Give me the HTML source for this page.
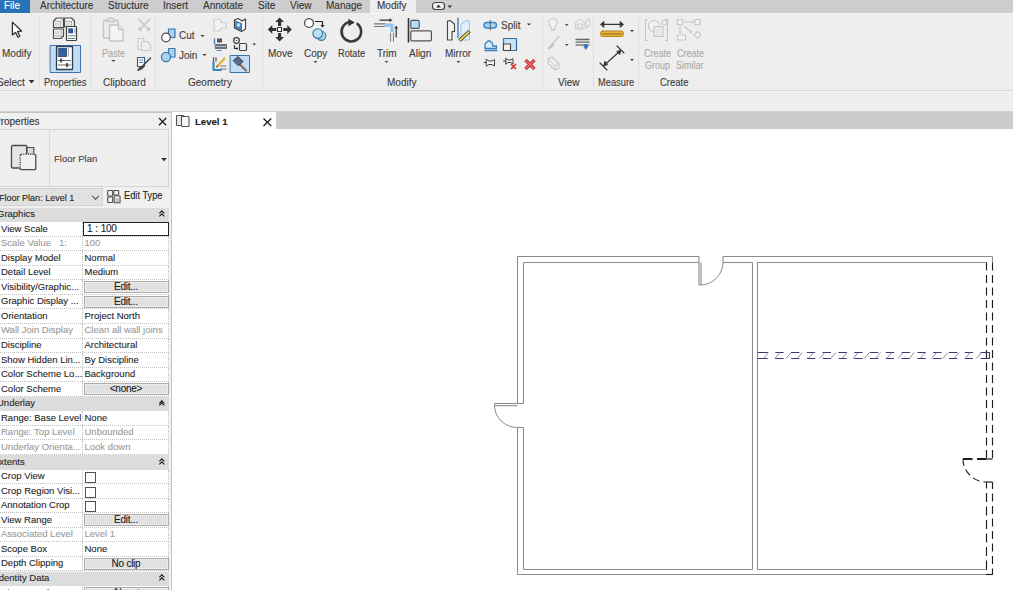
<!DOCTYPE html>
<html><head><meta charset="utf-8"><style>
*{margin:0;padding:0;box-sizing:border-box}
body{width:1013px;height:590px;overflow:hidden;position:relative;background:#fff;font-family:"Liberation Sans",sans-serif;color:#222;-webkit-text-stroke:0.1px currentColor}
.a{position:absolute}
.t{position:absolute;white-space:nowrap;font-size:10px;line-height:12px}
.rl{position:absolute;white-space:nowrap;font-size:10px;line-height:12px;color:#3a3a3a}
.sep{position:absolute;top:15px;width:1px;height:73px;background:#e0e0e0}
.row{position:absolute;left:0;width:169px;height:14.56px;background:#fff;border-bottom:1px dotted #c0c0c0;border-right:1px dotted #c0c0c0;font-size:9.5px;line-height:12px}
.row .k{position:absolute;left:1px;top:0.5px;color:#262626}
.row .v{position:absolute;left:82px;top:0;width:86px;height:13.56px;border-left:1px dotted #c0c0c0}
.row .vt{position:absolute;left:1.5px;top:0.5px;color:#262626}
.row.dis .k,.row.dis .vt{color:#9a9a9a}
.hd{position:absolute;left:0;width:169px;height:14.56px;background:#dcdcdc;font-size:9.5px;line-height:12px}
.hd .k{position:absolute;left:-3px;top:0.5px;color:#262626}
.chev{position:absolute;left:158.5px;top:3px;width:6px;height:7px}
.chev:before,.chev:after{content:"";position:absolute;left:1px;width:2.6px;height:2.6px;border-left:1.5px solid #111;border-top:1.5px solid #111;transform:rotate(45deg)}
.chev:before{top:0.8px}.chev:after{top:3.6px}
.btn{position:absolute;left:0.5px;top:1px;width:85px;height:12px;background:#e1e1e1;border:1px solid #ababab;box-shadow:inset 0 0 0 1px #ececec;text-align:center;color:#1a1a1a;line-height:10px;font-size:10px;letter-spacing:-0.25px}
.cb{position:absolute;left:2px;top:2.5px;width:11px;height:11px;border:1.3px solid #505050;background:#fff}
.vbox{position:absolute;left:0;top:0;width:86px;height:14px;border:1.6px solid #222;background:#fff;padding-left:3px;line-height:12px;font-size:10px;color:#222;letter-spacing:-0.3px;word-spacing:0.5px}
</style></head><body>
<!-- tab bar -->
<div class="a" style="left:0;top:0;width:1013px;height:13px;background:#cdcdcd"></div>
<div class="a" style="left:0;top:0;width:30px;height:13px;background:#2872b6"></div>
<div class="t" style="left:4px;top:0px;color:#fff">File</div>
<div class="t" style="left:40px;top:0px;color:#333">Architecture</div>
<div class="t" style="left:108px;top:0px;color:#333">Structure</div>
<div class="t" style="left:163px;top:0px;color:#333">Insert</div>
<div class="t" style="left:203px;top:0px;color:#333">Annotate</div>
<div class="t" style="left:258px;top:0px;color:#333">Site</div>
<div class="t" style="left:290px;top:0px;color:#333">View</div>
<div class="t" style="left:326px;top:0px;color:#333">Manage</div>
<div class="a" style="left:370px;top:0;width:46px;height:14px;background:#eeeeee"></div>
<div class="t" style="left:377px;top:0px;color:#333">Modify</div>
<!-- ribbon -->
<div class="a" style="left:0;top:13px;width:1013px;height:78px;background:#eeeeee;border-top:1px solid #f4f4f4;border-bottom:1px solid #f4f4f4"></div>
<div class="a" style="left:0;top:90px;width:1013px;height:1px;background:#d9d9d9"></div>
<div class="a" style="left:0;top:91px;width:1013px;height:21px;background:#efefef;border-top:1px solid #f4f4f4"></div>
<div class="sep" style="left:39px"></div>
<div class="sep" style="left:90px"></div>
<div class="sep" style="left:155px"></div>
<div class="sep" style="left:262px"></div>
<div class="sep" style="left:542px"></div>
<div class="sep" style="left:593px"></div>
<div class="sep" style="left:638px"></div>

<div class="rl" style="left:2px;top:48px">Modify</div>
<div class="rl" style="left:-3px;top:77px">Select</div>
<div class="rl" style="left:44px;top:77px;transform:scaleX(0.93);transform-origin:0 0">Properties</div>
<div class="rl" style="left:102px;top:48px;color:#aaa;transform:scaleX(0.9);transform-origin:0 0">Paste</div>
<div class="rl" style="left:103px;top:77px">Clipboard</div>
<div class="rl" style="left:179px;top:30px">Cut</div>
<div class="rl" style="left:179px;top:50px">Join</div>
<div class="rl" style="left:188px;top:77px">Geometry</div>
<div class="rl" style="left:268px;top:48px">Move</div>
<div class="rl" style="left:304px;top:48px">Copy</div>
<div class="rl" style="left:338px;top:48px;transform:scaleX(0.92);transform-origin:0 0">Rotate</div>
<div class="rl" style="left:377px;top:48px">Trim</div>
<div class="rl" style="left:409px;top:48px">Align</div>
<div class="rl" style="left:445px;top:48px">Mirror</div>
<div class="rl" style="left:387px;top:77px">Modify</div>
<div class="rl" style="left:501px;top:20px">Split</div>
<div class="rl" style="left:558px;top:77px">View</div>
<div class="rl" style="left:598px;top:77px;transform:scaleX(0.93);transform-origin:0 0">Measure</div>
<div class="rl" style="left:644px;top:48px;color:#aaa;transform:scaleX(0.9);transform-origin:0 0">Create</div>
<div class="rl" style="left:645px;top:60px;color:#aaa;transform:scaleX(0.9);transform-origin:0 0">Group</div>
<div class="rl" style="left:677px;top:48px;color:#aaa;transform:scaleX(0.9);transform-origin:0 0">Create</div>
<div class="rl" style="left:676px;top:60px;color:#aaa;transform:scaleX(0.9);transform-origin:0 0">Similar</div>
<div class="rl" style="left:660px;top:77px;transform:scaleX(0.95);transform-origin:0 0">Create</div>

<!--ICONS-->
<svg class="a" style="left:0;top:0" width="1013" height="130" viewBox="0 0 1013 130">
<g fill="none" stroke-linejoin="round" stroke-linecap="round">
<!-- tab icon -->
<rect x="432.5" y="2.5" width="12" height="7" rx="3" stroke="#444" stroke-width="1.2" fill="#f4f4f4"/>
<path d="M436 7.5 L438.5 4.5 L441 7.5Z" fill="#333" stroke="none"/>
<path d="M447.5 5.5 L452 5.5 L449.75 8Z" fill="#333" stroke="none"/>
<!-- cursor -->
<path d="M12.4 22.1 L12.4 35 L15.4 32.4 L18 37.2 L19.8 36.2 L17.6 31.6 L21.5 31 Z" fill="#fff" stroke="#333" stroke-width="1.3"/>
<!-- select arrow -->
<path d="M28.6 80 L34.5 80 L31.55 83.4Z" fill="#333" stroke="none"/>
<!-- properties type icon: cubes -->
<g stroke="#4a4a4a" stroke-width="1.2" fill="#f3f3f3">
<path d="M53.5 21 L56.5 18 H63.5 V27.5 H53.5Z"/>
<path d="M53.5 29 H63.5 V36 L61 38.5 H53.5Z"/>
<path d="M64.5 18 H71.5 L74.5 21 V27 H64.5Z"/>
</g>
<g stroke="#9a9a9a" stroke-width="0.8" fill="none">
<path d="M53.5 21.5 H60.5 L63.5 18.5 M60.5 21.5 V27"/>
<path d="M53.5 36 H61 M61 29.5 V38"/>
<path d="M64.8 21.5 H71.5 L74.3 18.5 M71.5 21.5 V27"/>
</g>
<g fill="#d8d8d8" stroke="none">
<rect x="55" y="23" width="4" height="3"/>
<rect x="55" y="31" width="4" height="3.5"/>
<rect x="66" y="23" width="4" height="3"/>
</g>
<rect x="66.5" y="26.5" width="10" height="14" rx="0.8" fill="#fff" stroke="#3c3c3c" stroke-width="1.2"/>
<rect x="68.3" y="28.3" width="4.8" height="5" fill="#2b579a" stroke="none"/>
<path d="M75 28.5 V33" stroke="#999" stroke-width="1"/>
<path d="M68.3 35.8 H75 M68.3 38.5 H75" stroke="#5a6b80" stroke-width="0.9"/>
<!-- properties highlighted -->
<rect x="50.5" y="45.5" width="30" height="27" fill="#c4ddf6" stroke="#3d72aa" stroke-width="1"/>
<rect x="56.5" y="46.5" width="16" height="23" fill="#fff" stroke="#2d3f55" stroke-width="1.3"/>
<rect x="58.5" y="48.5" width="8" height="8" fill="#3760a0" stroke="#243c66" stroke-width="0.8"/>
<path d="M68.5 48.5 V56" stroke="#aaa" stroke-width="1.2"/>
<path d="M58.5 60.5 H70.5 M58.5 65 H70.5" stroke="#666" stroke-width="1.2"/>
<path d="M61 59 V62 M67 63.5 V66.5" stroke="#333" stroke-width="1.6"/>
<!-- paste (disabled) -->
<g stroke="#c4c4c4" stroke-width="1.3" fill="#ededed">
<path d="M103.5 20.5 H118 V38 H103.5Z"/>
<path d="M107 19.5 Q110.75 16.5 114.5 19.5 V21.5 H107Z"/>
<path d="M109.5 25 H118.5 L123 29.5 V41 H109.5Z" fill="#f4f4f4"/>
<path d="M118.5 25 V29.5 H123" />
</g>
<path d="M111.5 60 L115.5 60 L113.5 62Z" fill="#444" stroke="none"/>
<!-- scissors disabled -->
<g stroke="#c6c6c6" stroke-width="1.6">
<path d="M139 19.5 L149.5 30 M149.5 19.5 L139 30"/>
<path d="M139 28 L141 30.5 M149.5 28 L147.5 30.5"/>
</g>
<!-- copy disabled -->
<g stroke="#c8c8c8" stroke-width="1.1" fill="#efefef">
<path d="M138 38.5 H144 V49.5 H138Z"/>
<path d="M141.5 41.5 H147 L150.5 45 V50.5 H141.5Z"/>
</g>
<!-- match properties -->
<rect x="137.5" y="57.5" width="7" height="9" fill="#fff" stroke="#3a5f7a" stroke-width="1.2"/>
<path d="M139.5 60 H142.5 M139.5 62.5 H142.5" stroke="#3a7fb8" stroke-width="1.2"/>
<path d="M150.5 58 L142 66.5" stroke="#444" stroke-width="1.5"/>
<path d="M142 66 Q138.5 67.5 137.5 70.5 Q141 70 143.5 67.5Z" fill="#444" stroke="#444" stroke-width="1"/>
<!-- cut -->
<rect x="168.5" y="29" width="6.5" height="8.5" fill="#a9d3ef" stroke="#3678ad" stroke-width="1.2"/>
<circle cx="166" cy="37.5" r="4.3" fill="#fff" stroke="#5a4a4a" stroke-width="1.2"/>
<path d="M200.5 35 L204.5 35 L202.5 37Z" fill="#333" stroke="none"/>
<!-- join -->
<rect x="168.5" y="48.5" width="6.5" height="8.5" fill="#a9d3ef" stroke="#3678ad" stroke-width="1.2"/>
<circle cx="166" cy="57" r="4.6" fill="#a9d3ef" stroke="#3678ad" stroke-width="1.2"/>
<path d="M202.5 54 L206.5 54 L204.5 56Z" fill="#333" stroke="none"/>
<!-- unjoin gray -->
<g stroke="#cfcfcf" stroke-width="1.2" fill="#f2f2f2">
<path d="M214 19 H219 L222 22 V28 L219 31 H214Z"/>
<path d="M221 22.5 H226 V28 H221"/>
</g>
<!-- 3d wall -->
<path d="M234.5 20 L238 18.5 L242 21 L245.5 19 V29 L241.5 31.5 L234.5 28Z" fill="#fff" stroke="#444" stroke-width="1.2"/>
<path d="M235.5 21 L241.5 23.5 V30.5 L235.5 27.5Z" fill="#4a8dc8" stroke="#2a5a8a" stroke-width="0.8"/>
<rect x="237" y="23.5" width="3" height="3" fill="#bfe0f7" stroke="none"/>
<!-- split face -->
<path d="M214.5 39 V43.5" stroke="#3a7fc4" stroke-width="1.3"/>
<rect x="217" y="38.5" width="5" height="4" fill="#555" stroke="none"/>
<rect x="215.5" y="44.5" width="11" height="4" fill="#657080" stroke="#444" stroke-width="0.6"/>
<path d="M216.5 46.5 H225.5" stroke="#ddd" stroke-width="0.8" stroke-dasharray="1 1"/>
<path d="M217 50.5 H221" stroke="#4a84c4" stroke-width="1"/>
<!-- wall joins -->
<circle cx="236.5" cy="40.5" r="2.8" fill="#fff" stroke="#333" stroke-width="1.2"/>
<circle cx="236.5" cy="40.5" r="0.8" fill="#333" stroke="none"/>
<path d="M234.5 45.5 V48.5 H237" stroke="#333" stroke-width="1.2"/>
<circle cx="237" cy="48.5" r="1" fill="#111" stroke="none"/>
<rect x="239.5" y="43.5" width="7" height="7" rx="1" fill="#f2f2f2" stroke="#444" stroke-width="1.2"/>
<path d="M252.5 43.5 L256 43.5 L254.25 45.5Z" fill="#333" stroke="none"/>
<!-- paint row3 -->
<path d="M213.5 57.5 V61 M216 57.5 V61" stroke="#555" stroke-width="1.2"/>
<path d="M213.5 62 V70 H221" stroke="#3a86c6" stroke-width="2.2"/>
<path d="M220.5 66 H226 M220.5 69 H226" stroke="#777" stroke-width="1.2"/>
<path d="M217.5 66 L224.5 58.5" stroke="#e3b52c" stroke-width="2.4"/>
<path d="M217.5 66 L216.8 67" stroke="#555" stroke-width="1.2"/>
<!-- hammer highlight -->
<rect x="230.5" y="55.5" width="19" height="17" fill="#c4ddf6" stroke="#3d72aa" stroke-width="1"/>
<path d="M239 63.5 L246 70.5" stroke="#8a6a5a" stroke-width="2.2"/>
<path d="M233.5 60.5 L238 56.5 L243 61.5 L238.5 65.5Z" fill="#5a6a80" stroke="#2a3a50" stroke-width="1"/>
<!-- move -->
<g fill="#333" stroke="none">
<path d="M279.6 17.5 L284 22 L281.2 22 L281.2 26 L278 26 L278 22 L275.2 22Z"/>
<path d="M279.6 41.5 L284 37 L281.2 37 L281.2 33 L278 33 L278 37 L275.2 37Z"/>
<path d="M267.8 29.5 L272.3 25.1 L272.3 27.9 L276.3 27.9 L276.3 31.1 L272.3 31.1 L272.3 33.9Z"/>
<path d="M291.8 29.5 L287.3 25.1 L287.3 27.9 L283.3 27.9 L283.3 31.1 L287.3 31.1 L287.3 33.9Z"/>
</g>
<rect x="277.5" y="27.5" width="4" height="4" fill="#fff" stroke="#333" stroke-width="1.1"/>
<!-- copy -->
<circle cx="309" cy="23.1" r="4.4" fill="#fff" stroke="#333" stroke-width="1.1"/>
<path d="M315.5 21.5 H322.5 V25" stroke="#222" stroke-width="1.2"/>
<path d="M320.3 25 L324.7 25 L322.5 27.5Z" fill="#222" stroke="none"/>
<circle cx="321.3" cy="35.8" r="4.6" fill="#a8d8f0" stroke="#3d7a9a" stroke-width="1.1"/>
<circle cx="317.7" cy="33.6" r="4.8" fill="#b8e0f5" stroke="#3d7a9a" stroke-width="1.1"/>
<path d="M313.5 61 L317.5 61 L315.5 63Z" fill="#444" stroke="none"/>
<!-- rotate -->
<path d="M357.5 24 A9.8 9.8 0 1 1 349.5 22" stroke="#3a3a3a" stroke-width="2.6"/>
<path d="M348.4 18.8 L354.8 22.5 L348.4 26.2Z" fill="#333" stroke="none"/>
<!-- trim -->
<path d="M374.5 23.8 H385 M374.5 26.5 H385" stroke="#777" stroke-width="1.2"/>
<path d="M384.5 25.2 H392 V32" stroke="#8fc3ee" stroke-width="3.2" stroke-linecap="butt"/>
<path d="M390.5 33 V41.5 M393.5 33 V41.5" stroke="#888" stroke-width="1.1"/>
<path d="M380 20.2 H390" stroke="#333" stroke-width="1.2"/>
<path d="M389.5 18.3 L392.5 20.2 L389.5 22.1Z" fill="#333" stroke="none"/>
<path d="M396.2 37 V28" stroke="#333" stroke-width="1.2"/>
<path d="M394.3 28.5 L396.2 25.5 L398.1 28.5Z" fill="#333" stroke="none"/>
<path d="M384.5 61 L388.5 61 L386.5 63Z" fill="#444" stroke="none"/>
<!-- align -->
<path d="M408.5 18 V42.5" stroke="#333" stroke-width="1.6" stroke-linecap="butt"/>
<rect x="410.8" y="20.4" width="8.4" height="8" rx="1" fill="#b5dcf3" stroke="#555" stroke-width="1.1"/>
<rect x="410.8" y="30.8" width="20.6" height="10" rx="1" fill="#f0f0f0" stroke="#555" stroke-width="1.2"/>
<!-- mirror -->
<path d="M447.5 21 L450 20.5 L454.5 24 V31.5 L452 31.5 V40 L447.5 40Z" fill="#f4f4f4" stroke="#444" stroke-width="1.1"/>
<path d="M458 17.8 V38" stroke="#4b86c0" stroke-width="1.5" stroke-linecap="butt"/>
<path d="M469 21 L466.5 20.5 L461 24 V40 L469 40Z" fill="#dff0fb" stroke="#9cc2dc" stroke-width="1"/>
<path d="M469.5 31.3 L459.5 40.5" stroke="#222" stroke-width="3.4" stroke-linecap="butt"/>
<path d="M469.2 31.6 L459.8 40.2" stroke="#f5d84a" stroke-width="2" stroke-linecap="butt"/>
<path d="M456.5 61 L460.5 61 L458.5 63Z" fill="#444" stroke="none"/>
<!-- split -->
<rect x="484" y="22.5" width="12.5" height="5.5" rx="2.75" fill="#a9d3ef" stroke="#3a86c6" stroke-width="1.4"/>
<path d="M490.25 20.5 V30" stroke="#555" stroke-width="1" stroke-dasharray="1.2 1"/>
<path d="M527 23.5 L531 23.5 L529 25.5Z" fill="#333" stroke="none"/>
<!-- offset (row2 left) -->
<path d="M485 48.5 V44 L488 41 H490 L492.5 43.5 V46 H496.5 V48.5Z" fill="#dbeefa" stroke="#3a7fb8" stroke-width="1.3"/>
<path d="M485 50.5 H497" stroke="#3a7fb8" stroke-width="1.3"/>
<!-- row2 right -->
<rect x="503.5" y="38.5" width="13" height="12" fill="#c6e2f6" stroke="#3a6f9f" stroke-width="1.2"/>
<rect x="503.5" y="44" width="7" height="6.5" fill="#f4f4f4" stroke="#444" stroke-width="1.1"/>
<!-- pin -->
<path d="M484 62.5 H486.5 M486.5 59.5 L489 61 H492 L494.5 59.5 V66 L492 64.5 H489 L486.5 66Z" fill="#f6f6f6" stroke="#444" stroke-width="1"/>
<!-- unpin -->
<path d="M503.5 61 H506 M506 58.5 L508 60 H511 L513 58.5 V64 L511 62.5 H508 L506 64Z" fill="#f6f6f6" stroke="#444" stroke-width="1"/>
<path d="M511.5 64.5 L515.5 68.5 M515.5 64.5 L511.5 68.5" stroke="#d03030" stroke-width="1.7"/>
<!-- red X -->
<path d="M525.5 60 L534.5 69 M534.5 60 L525.5 69" stroke="#b83030" stroke-width="3.2" stroke-linecap="butt"/>
<path d="M525.8 60.3 L534.2 68.7 M534.2 60.3 L525.8 68.7" stroke="#f06a6a" stroke-width="1.4" stroke-linecap="butt"/>
<!-- view: bulb -->
<g stroke="#cacaca" stroke-width="1.1" fill="#f2f2f2">
<path d="M553 18.5 A4.2 4.2 0 0 1 557.2 22.7 Q557.2 25 555 27 V29 H551 V27 Q548.8 25 548.8 22.7 A4.2 4.2 0 0 1 553 18.5Z"/>
<path d="M551.5 30.5 H554.5"/>
</g>
<path d="M565 24 L568.5 24 L566.75 26Z" fill="#444" stroke="none"/>
<!-- house disabled -->
<g stroke="#c8c8c8" stroke-width="1" fill="#f0f0f0">
<path d="M576 22 L580 19 L584 22 V29 H576Z"/>
<rect x="578" y="24" width="4" height="4"/>
<path d="M586 21 L589 19 L590 24 L587 28Z"/>
</g>
<!-- brush disabled -->
<path d="M559 36.5 L552 44" stroke="#c8c8c8" stroke-width="1.3"/>
<path d="M552.5 43.5 Q549 46 548 49 Q551 48.5 554 45.5Z" fill="#c8c8c8" stroke="#c0c0c0" stroke-width="0.8"/>
<path d="M565 44 L568.5 44 L566.75 46Z" fill="#444" stroke="none"/>
<!-- lines with arrow -->
<path d="M576 39.5 H589 M576 42.2 H589" stroke="#666" stroke-width="1.3"/>
<path d="M576 45 H589" stroke="#333" stroke-width="1" stroke-dasharray="1.5 1"/>
<path d="M584 46 L588 46 L586 49.5Z M585.2 44.5 H586.8 V47 H585.2Z" fill="#2a6fc0" stroke="#2a6fc0" stroke-width="0.6"/>
<!-- tile disabled -->
<path d="M548 59 L552 57 L559 64 V68 L555 70 L548 63Z" fill="#f0f0f0" stroke="#c8c8c8" stroke-width="1.1"/>
<path d="M548 59 L555 66 V70 M555 66 L559 64" stroke="#c8c8c8" stroke-width="1"/>
<!-- measure -->
<path d="M601.5 24.3 H622.5" stroke="#333" stroke-width="1.3"/>
<path d="M600.5 24.3 L604 21.3 V27.3Z M623.5 24.3 L620 21.3 V27.3Z" fill="#333" stroke="#333" stroke-width="0.6"/>
<rect x="600.5" y="31" width="23" height="5.5" rx="2" fill="#e7b63a" stroke="#b8861c" stroke-width="1"/>
<path d="M602.5 34 H621.5" stroke="#7a5a10" stroke-width="1" stroke-dasharray="1 1"/>
<path d="M630 30 L634 30 L632 32Z" fill="#333" stroke="none"/>
<path d="M604 65.5 L620.5 50.5" stroke="#333" stroke-width="1.1"/>
<path d="M600 63 L607 70 M617 46 L624 53" stroke="#333" stroke-width="1.1"/>
<path d="M603.8 65.6 L604.8 61.3 L607.6 64.3Z M620.7 50.4 L619.7 54.7 L616.9 51.7Z" fill="#333" stroke="#333" stroke-width="0.8"/>
<path d="M630 59 L634 59 L632 61Z" fill="#333" stroke="none"/>
<!-- create group disabled -->
<g stroke="#c6c6c6" stroke-width="1.1" fill="none">
<path d="M647.5 19.5 H645.5 V40.5 H647.5 M665.5 19.5 H667.5 V40.5 H665.5"/>
<circle cx="654" cy="26" r="5.5" fill="#f2f2f2"/>
<rect x="654" y="26.5" width="9" height="10" fill="#e8e8e8"/>
<circle cx="664.5" cy="22.5" r="2.5" stroke-dasharray="1.2 0.8"/>
</g>
<!-- create similar disabled -->
<g stroke="#c6c6c6" stroke-width="1.1" fill="#f2f2f2">
<rect x="677.5" y="19.5" width="5" height="5"/>
<rect x="695" y="19.5" width="5" height="5"/>
<rect x="677.5" y="35" width="8" height="5"/>
<path d="M697.5 31.5 L701 35 L697.5 38.5 L694 35Z"/>
<path d="M684 22 H692 M680 26 V32 M684.5 26.5 L691 32" fill="none"/>
</g>
<g fill="#c6c6c6" stroke="none">
<path d="M692 20 L694 22 L692 24Z M678 31.5 H682 L680 33.5Z M691.5 30.5 L692.5 33.5 L689.5 33Z"/>
</g>
</g>
</svg>

<!--/ICONS-->
<!-- doc tab bar -->
<div class="a" style="left:0;top:111px;width:1013px;height:1px;background:#d0d0d0"></div>
<div class="a" style="left:172px;top:112px;width:841px;height:17px;background:#cccccc"></div>
<div class="a" style="left:172px;top:112px;width:104px;height:17px;background:#fff"></div>
<div class="t" style="left:195px;top:116px;font-weight:bold;font-size:9.6px;line-height:12px;color:#222">Level 1</div>

<!-- properties panel -->
<div class="a" style="left:0;top:112px;width:172px;height:478px;background:#f0f0f0"></div>
<div class="a" style="left:0;top:112px;width:172px;height:1px;background:#c4c4c4"></div>
<div class="a" style="left:171px;top:112px;width:1px;height:478px;background:#c6c6c6"></div>
<div class="t" style="left:-6px;top:116px;font-size:10px;color:#333">Properties</div>
<!-- type box -->
<div class="a" style="left:0;top:129px;width:169px;height:58px;border:1px solid #d4d4d4;border-left:none;background:#efefef"></div>
<div class="a" style="left:49px;top:130px;width:1px;height:56px;background:#d8d8d8"></div>
<div class="t" style="left:54px;top:153px;font-size:9.5px;color:#444">Floor Plan</div>
<div class="a" style="left:0;top:188px;width:103px;height:18px;background:#e1e1e1;border:1px solid #d2d2d2;border-left:none"></div>
<div class="t" style="left:-1px;top:192px;font-size:9.5px;color:#222;transform:scaleX(0.95);transform-origin:0 0">Floor Plan: Level 1</div>
<div class="t" style="left:124px;top:189px;font-size:10.6px;color:#222;transform:scaleX(0.875);transform-origin:0 0">Edit Type</div>

<div id="grid">
<div class="hd" style="top:207.50px"><span class="k">Graphics</span><span class="chev"></span></div>
<div class="row" style="top:222.06px"><span class="k">View Scale</span><div class="v"><div class="vbox">1 : 100</div></div></div>
<div class="row dis" style="top:236.62px"><span class="k">Scale Value<span style="position:absolute;left:58px">1:</span></span><div class="v"><span class="vt">100</span></div></div>
<div class="row" style="top:251.18px"><span class="k">Display Model</span><div class="v"><span class="vt">Normal</span></div></div>
<div class="row" style="top:265.74px"><span class="k">Detail Level</span><div class="v"><span class="vt">Medium</span></div></div>
<div class="row" style="top:280.30px"><span class="k">Visibility/Graphic...</span><div class="v"><div class="btn">Edit...</div></div></div>
<div class="row" style="top:294.86px"><span class="k">Graphic Display ...</span><div class="v"><div class="btn">Edit...</div></div></div>
<div class="row" style="top:309.42px"><span class="k">Orientation</span><div class="v"><span class="vt">Project North</span></div></div>
<div class="row dis" style="top:323.98px"><span class="k">Wall Join Display</span><div class="v"><span class="vt">Clean all wall joins</span></div></div>
<div class="row" style="top:338.54px"><span class="k">Discipline</span><div class="v"><span class="vt">Architectural</span></div></div>
<div class="row" style="top:353.10px"><span class="k">Show Hidden Lin...</span><div class="v"><span class="vt">By Discipline</span></div></div>
<div class="row" style="top:367.66px"><span class="k">Color Scheme Lo...</span><div class="v"><span class="vt">Background</span></div></div>
<div class="row" style="top:382.22px"><span class="k">Color Scheme</span><div class="v"><div class="btn">&lt;none&gt;</div></div></div>
<div class="hd" style="top:396.78px"><span class="k">Underlay</span><span class="chev"></span></div>
<div class="row" style="top:411.34px"><span class="k">Range: Base Level</span><div class="v"><span class="vt">None</span></div></div>
<div class="row dis" style="top:425.90px"><span class="k">Range: Top Level</span><div class="v"><span class="vt">Unbounded</span></div></div>
<div class="row dis" style="top:440.46px"><span class="k">Underlay Orienta...</span><div class="v"><span class="vt">Look down</span></div></div>
<div class="hd" style="top:455.02px"><span class="k" style="left:-7px">Extents</span><span class="chev"></span></div>
<div class="row" style="top:469.58px"><span class="k">Crop View</span><div class="v"><div class="cb"></div></div></div>
<div class="row" style="top:484.14px"><span class="k">Crop Region Visi...</span><div class="v"><div class="cb"></div></div></div>
<div class="row" style="top:498.70px"><span class="k">Annotation Crop</span><div class="v"><div class="cb"></div></div></div>
<div class="row" style="top:513.26px"><span class="k">View Range</span><div class="v"><div class="btn">Edit...</div></div></div>
<div class="row dis" style="top:527.82px"><span class="k">Associated Level</span><div class="v"><span class="vt">Level 1</span></div></div>
<div class="row" style="top:542.38px"><span class="k">Scope Box</span><div class="v"><span class="vt">None</span></div></div>
<div class="row" style="top:556.94px"><span class="k">Depth Clipping</span><div class="v"><div class="btn">No clip</div></div></div>
<div class="hd" style="top:571.50px"><span class="k" style="left:-4px">Identity Data</span><span class="chev"></span></div>
<div class="row" style="top:586.06px"><span class="k">View Template</span><div class="v"><div class="btn">&lt;None&gt;</div></div></div>
</div>

<!--MISC-->
<svg class="a" style="left:0;top:0" width="300" height="220" viewBox="0 0 300 220">
<g fill="none" stroke-linejoin="round">
<!-- properties close X -->
<path d="M159 118 L166.2 125.2 M166.2 118 L159 125.2" stroke="#222" stroke-width="1.3"/>
<!-- doc tab X -->
<path d="M263.5 118.5 L271.3 126 M271.3 118.5 L263.5 126" stroke="#222" stroke-width="1.3"/>
<!-- doc tab icon -->
<rect x="176.5" y="115.5" width="7.5" height="10" rx="0.8" fill="#e8e8e8" stroke="#555" stroke-width="1.1"/>
<rect x="181.5" y="116.5" width="7.5" height="10" rx="0.8" fill="#fafafa" stroke="#555" stroke-width="1.1"/>
<path d="M181.5 116.8 V121" stroke="#444" stroke-width="1.1" stroke-dasharray="1 1"/>
<!-- type icon -->
<rect x="11.5" y="145.5" width="15.5" height="22.5" rx="1.2" fill="#e3e5e8" stroke="#4a4a4a" stroke-width="1.3"/>
<rect x="27" y="147.5" width="6.8" height="6.7" fill="#dcdcdc" stroke="#4a4a4a" stroke-width="1.2"/>
<rect x="20.3" y="154.3" width="15.5" height="15.3" rx="1.2" fill="#eef0f2" stroke="#4a4a4a" stroke-width="1.3"/>
<path d="M20.3 155 V168" stroke="#eef0f2" stroke-width="1.6"/>
<path d="M21 154.3 H34" stroke="#eef0f2" stroke-width="1.6"/>
<path d="M20.3 155 V168 M21 154.3 H34 M26.5 148 V154" stroke="#333" stroke-width="1.2" stroke-dasharray="1 1.3"/>
<!-- type dropdown arrow -->
<path d="M161 158 L167 158 L164 161.2Z" fill="#333"/>
<!-- chevron down -->
<path d="M92.3 195.8 L95.5 199.3 L98.7 195.8" stroke="#555" stroke-width="1.1"/>
<!-- edit type icon -->
<g stroke="#4a4a4a" stroke-width="1.1" fill="#f4f4f4">
<rect x="107.7" y="190.5" width="5" height="5.5" rx="0.8"/>
<rect x="107.7" y="197" width="5" height="5.5" rx="0.8"/>
<rect x="113.7" y="190.5" width="5" height="4.5" rx="0.8"/>
<rect x="114.2" y="196" width="5.8" height="6.8" fill="#fff"/>
</g>
<path d="M115.5 199 H118.7 M115.5 201 H118.7" stroke="#555" stroke-width="0.8"/>
</g>
</svg>

<!--/MISC-->
<!-- canvas -->
<svg class="a" style="left:0;top:0" width="1013" height="590" viewBox="0 0 1013 590"><g fill="none">
<path d="M517.5 256.5 L699 256.5" stroke="#8c8c8c" stroke-width="1.1"/>
<path d="M723 256.5 L992.5 256.5" stroke="#8c8c8c" stroke-width="1.1"/>
<path d="M699 256.5 L699 262.5" stroke="#8c8c8c" stroke-width="1.1"/>
<path d="M723 256.5 L723 262.5" stroke="#8c8c8c" stroke-width="1.1"/>
<path d="M523.5 262.5 L699 262.5" stroke="#8c8c8c" stroke-width="1.1"/>
<path d="M723 262.5 L752.5 262.5" stroke="#8c8c8c" stroke-width="1.1"/>
<path d="M757.5 262.5 L986.5 262.5" stroke="#8c8c8c" stroke-width="1.1"/>
<path d="M699 262.5 L699 285" stroke="#8c8c8c" stroke-width="1.1"/>
<path d="M701 262.5 L701 285" stroke="#8c8c8c" stroke-width="1.1"/>
<path d="M699 285 L701 285" stroke="#8c8c8c" stroke-width="1.1"/>
<path d="M701 285 A23 23 0 0 0 723 262.5" stroke="#8c8c8c" stroke-width="1"/>
<path d="M517.5 256.5 L517.5 403.5" stroke="#8c8c8c" stroke-width="1.1"/>
<path d="M517.5 427.5 L517.5 574.5" stroke="#8c8c8c" stroke-width="1.1"/>
<path d="M523.5 262.5 L523.5 403.5" stroke="#8c8c8c" stroke-width="1.1"/>
<path d="M523.5 427.5 L523.5 569.5" stroke="#8c8c8c" stroke-width="1.1"/>
<path d="M517.5 403.5 L523.5 403.5" stroke="#8c8c8c" stroke-width="1.1"/>
<path d="M517.5 427.5 L523.5 427.5" stroke="#8c8c8c" stroke-width="1.1"/>
<path d="M494.5 403.5 L517.5 403.5" stroke="#8c8c8c" stroke-width="1.1"/>
<path d="M494.5 405.7 L517.5 405.7" stroke="#8c8c8c" stroke-width="1.1"/>
<path d="M494.5 403.5 L494.5 405.7" stroke="#8c8c8c" stroke-width="1.1"/>
<path d="M494.5 405.7 A23 22 0 0 0 517.5 427.5" stroke="#8c8c8c" stroke-width="1"/>
<path d="M517.5 574.5 L992.5 574.5" stroke="#8c8c8c" stroke-width="1.1"/>
<path d="M523.5 569.5 L752.5 569.5" stroke="#8c8c8c" stroke-width="1.1"/>
<path d="M757.5 569.5 L986.5 569.5" stroke="#8c8c8c" stroke-width="1.1"/>
<path d="M752.5 262.5 L752.5 569.5" stroke="#8c8c8c" stroke-width="1.1"/>
<path d="M757.5 262.5 L757.5 569.5" stroke="#8c8c8c" stroke-width="1.1"/>
<path d="M992.5 256.5 L992.5 262.5" stroke="#8c8c8c" stroke-width="1.1"/>
<path d="M992.5 262.5 L992.5 459" stroke="#1e1e1e" stroke-width="1.15" stroke-dasharray="8 4.5" stroke-dashoffset="0"/>
<path d="M986.5 262.5 L986.5 459" stroke="#1e1e1e" stroke-width="1.15" stroke-dasharray="8 4.5" stroke-dashoffset="0"/>
<path d="M992.5 574.5 L992.5 482" stroke="#1e1e1e" stroke-width="1.15" stroke-dasharray="8 4.5" stroke-dashoffset="2"/>
<path d="M986.5 569.5 L986.5 482" stroke="#1e1e1e" stroke-width="1.15" stroke-dasharray="9 4.5" stroke-dashoffset="0"/>
<path d="M986.0 569.5 L986.5 569.5" stroke="#1e1e1e" stroke-width="1.2"/>
<path d="M986 574.5 L992.5 574.5" stroke="#1e1e1e" stroke-width="1.15"/>
<path d="M963 459 L986.5 459" stroke="#1e1e1e" stroke-width="2" stroke-dasharray="9.5 4.5" stroke-dashoffset="0"/>
<path d="M986.5 459 L992.5 459" stroke="#1e1e1e" stroke-width="1.2"/>
<path d="M986.5 482 L992.5 482" stroke="#1e1e1e" stroke-width="1.2"/>
<path d="M963 459 A23.5 23 0 0 0 986.5 482" stroke="#1e1e1e" stroke-width="1.1" stroke-dasharray="7 4"/>
<path d="M759.5 352.5 H989 M759.5 358.5 H989" stroke="#3a3a6e" stroke-width="1.2" stroke-dasharray="8.3 7.49"/>
<path d="M757.6 352.5 H760 M757.6 358.5 H760" stroke="#3a3a6e" stroke-width="1.2"/>
<path d="M763.6 358.5 L768.6 352.5 M774.8 358.5 L779.8 352.5 M786.0 358.5 L791.0 352.5 M797.2 358.5 L802.2 352.5 M808.4 358.5 L813.4 352.5 M819.6 358.5 L824.6 352.5 M830.8 358.5 L835.8 352.5 M842.0 358.5 L847.0 352.5 M853.2 358.5 L858.2 352.5 M864.4 358.5 L869.4 352.5 M875.6 358.5 L880.6 352.5 M886.8 358.5 L891.8 352.5 M898.0 358.5 L903.0 352.5 M909.2 358.5 L914.2 352.5 M920.4 358.5 L925.4 352.5 M931.6 358.5 L936.6 352.5 M942.8 358.5 L947.8 352.5 M954.0 358.5 L959.0 352.5 M965.2 358.5 L970.2 352.5 M976.4 358.5 L981.4 352.5" stroke="#7070a0" stroke-width="0.8" fill="none"/>
<path d="M986.5 352.5 H989.5 V358.5 H986.5" stroke="#3a3a6e" stroke-width="1.1" fill="none"/>
</g></svg>
</body></html>
